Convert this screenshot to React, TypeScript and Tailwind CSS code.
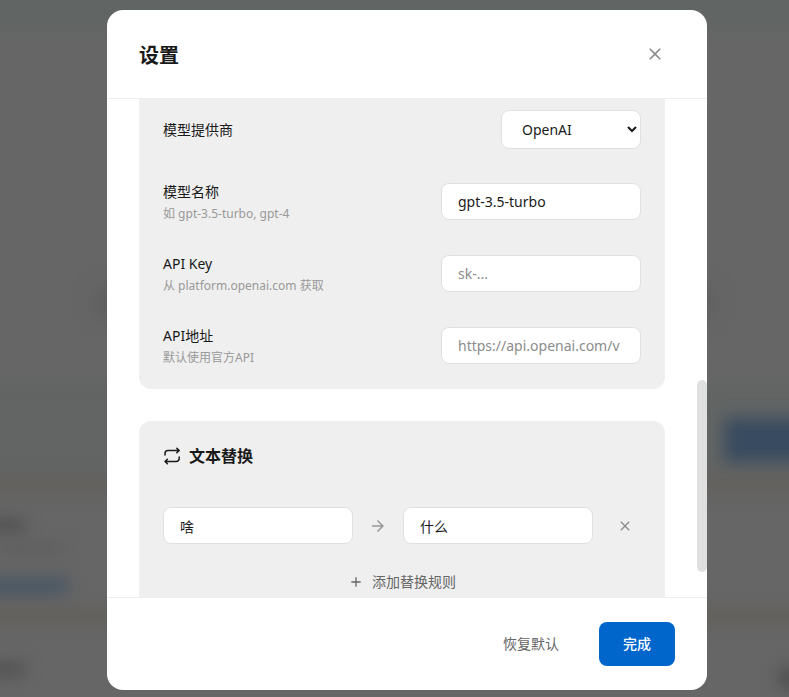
import { useState, type ReactNode } from "react";
import { MdAdd, MdArrowForward, MdClose } from "react-icons/md";

const inputClass =
  "h-[37px] min-w-0 rounded-lg border border-[#e0e0e0] bg-white px-4 text-sm text-[#1a1a1a] outline-none placeholder:text-[#8c8c8c]";

function RepeatIcon() {
  return (
    <svg width="18" height="18" viewBox="0 0 18 18" fill="none" stroke="currentColor" strokeWidth="1.5" strokeLinecap="round" strokeLinejoin="round" aria-hidden="true">
      <path d="M2 8V6.5A3 3 0 0 1 5 3.5H16M13.8 1.2L16.2 3.5L13.8 5.8" />
      <path d="M16.2 10V11.5A3 3 0 0 1 13.2 14.5H2M4.4 12.2L2 14.5L4.4 16.8" />
    </svg>
  );
}

function Row({ id, label, hint, children }: { id: string; label: string; hint?: string; children: ReactNode }) {
  return (
    <div className="flex min-h-[43px] items-center justify-between gap-4">
      <div className="flex flex-col">
        <label htmlFor={id} className="text-sm leading-6">{label}</label>
        {hint && <span className="text-xs leading-[19px] text-[#999]">{hint}</span>}
      </div>
      {children}
    </div>
  );
}

function Backdrop() {
  return (
    <div aria-hidden="true" className="absolute inset-0 overflow-hidden bg-[#666]">
      <div className="absolute -inset-x-8 -top-8 h-[60px] bg-[#616564] blur-sm" />
      <div className="absolute -inset-x-8 top-[384px] h-[88px] bg-[#626564] blur-sm" />
      <div className="absolute -inset-x-8 top-[476px] h-4 bg-[#63605c] blur-sm" />
      <div className="absolute -inset-x-8 top-[608px] h-4 bg-[#63605c] blur-sm" />
      <div className="absolute top-[292px] left-[100px] h-5 w-[608px] bg-[#565656] blur-md" />
      <div className="absolute top-[418px] left-[724px] h-[44px] w-40 bg-[#394b60] blur-sm" />
      <div className="absolute top-[519px] -left-5 h-3 w-[45px] bg-[#4e4e4e] blur-sm" />
      <div className="absolute top-[542px] left-0 h-3 w-[66px] bg-[#5f5f5f] blur-sm" />
      <div className="absolute top-[579px] -left-5 h-[14px] w-[88px] bg-[#435363] blur-sm" />
      <div className="absolute top-[663px] -left-5 h-3 w-[45px] bg-[#4e4e4e] blur-sm" />
      <div className="absolute top-[668px] left-[780px] h-5 w-5 bg-[#4c4c4c] blur-sm" />
    </div>
  );
}

export default function App() {
  const [provider, setProvider] = useState("OpenAI");
  const [model, setModel] = useState("gpt-3.5-turbo");
  const [apiKey, setApiKey] = useState("");
  const [apiUrl, setApiUrl] = useState("");
  const [from, setFrom] = useState("啥");
  const [to, setTo] = useState("什么");

  return (
    <div className="relative flex h-screen justify-center overflow-hidden pt-[10px] pb-[7px] pl-[25px] font-['Noto_Sans','Noto_Sans_CJK_SC',sans-serif] text-[#1a1a1a]">
      <Backdrop />
      <div role="dialog" aria-labelledby="settings-title" className="relative flex w-full max-w-[600px] flex-col overflow-hidden rounded-2xl bg-white">
        <header className="flex items-end justify-between border-b border-[#eee] px-8 py-6">
          <h1 id="settings-title" className="text-xl leading-9 font-bold">设置</h1>
          <button type="button" aria-label="关闭" className="flex size-10 items-center justify-center rounded-lg text-[#8c8c8c]">
            <MdClose size={20} />
          </button>
        </header>

        <main className="relative flex min-h-0 flex-1 flex-col gap-8 overflow-hidden pr-[42px] pl-8">
          <section className="flex shrink-0 flex-col gap-[29px] rounded-b-xl bg-[#efefef] px-6 pt-[9px] pb-[22px]">
            <Row id="provider" label="模型提供商">
              <select id="provider" value={provider} onChange={(e) => setProvider(e.target.value)} className="h-[39px] w-[140px] rounded-lg border border-[#e0e0e0] bg-white pl-4 text-sm text-[#1a1a1a]">
                <option>OpenAI</option>
              </select>
            </Row>
            <Row id="model" label="模型名称" hint="如 gpt-3.5-turbo, gpt-4">
              <input id="model" type="text" value={model} onChange={(e) => setModel(e.target.value)} className={`${inputClass} w-[200px]`} />
            </Row>
            <Row id="api-key" label="API Key" hint="从 platform.openai.com 获取">
              <input id="api-key" type="password" placeholder="sk-..." value={apiKey} onChange={(e) => setApiKey(e.target.value)} className={`${inputClass} w-[200px]`} />
            </Row>
            <Row id="api-url" label="API地址" hint="默认使用官方API">
              <input id="api-url" type="text" placeholder="https://api.openai.com/v" value={apiUrl} onChange={(e) => setApiUrl(e.target.value)} className={`${inputClass} w-[200px]`} />
            </Row>
          </section>

          <section className="flex shrink-0 flex-col rounded-t-xl bg-[#efefef] px-6 pt-6">
            <h2 className="flex items-center gap-2 text-base leading-[22px] font-bold">
              <RepeatIcon />
              文本替换
            </h2>
            <div className="mt-10 flex items-center gap-4">
              <input type="text" aria-label="原文本" value={from} onChange={(e) => setFrom(e.target.value)} className={`${inputClass} flex-1`} />
              <MdArrowForward size={18} className="shrink-0 text-[#999]" />
              <input type="text" aria-label="替换为" value={to} onChange={(e) => setTo(e.target.value)} className={`${inputClass} flex-1`} />
              <button type="button" aria-label="删除规则" className="flex size-8 shrink-0 items-center justify-center text-[#8c8c8c]">
                <MdClose size={16} />
              </button>
            </div>
            <button type="button" className="mt-4 flex h-11 items-center justify-center gap-2 text-sm text-[#666]">
              <MdAdd size={16} />
              添加替换规则
            </button>
          </section>
          <div aria-hidden="true" className="absolute top-[281px] right-0 h-48 w-[10px] rounded-full bg-[#e0e0e0]" />
        </main>

        <footer className="flex justify-end gap-4 border-t border-[#eee] px-8 py-6">
          <button type="button" className="h-11 rounded-lg px-6 text-sm text-[#666]">恢复默认</button>
          <button type="button" className="h-11 rounded-lg bg-[#0066cc] px-6 text-sm font-medium text-white">完成</button>
        </footer>
      </div>
    </div>
  );
}
